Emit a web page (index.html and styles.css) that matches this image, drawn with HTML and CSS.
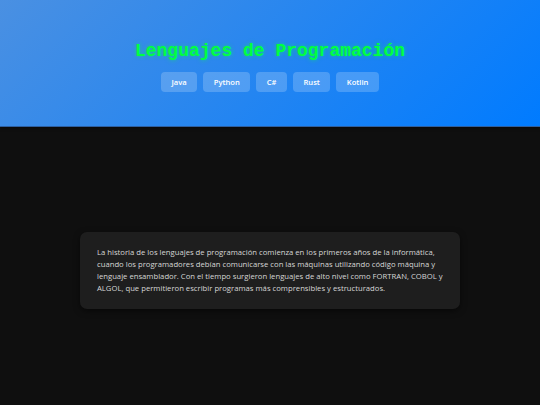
FILE: index.html
```html
<!DOCTYPE html>
<html lang="es">
<head>
<meta charset="utf-8">
<title>Lenguajes de Programación</title>
<link rel="stylesheet" href="styles.css">
</head>
<body>
<header class="hero">
  <h1 class="title">Lenguajes de Programación</h1>
  <nav class="tabs">
    <button class="tab">Java</button>
    <button class="tab">Python</button>
    <button class="tab">C#</button>
    <button class="tab">Rust</button>
    <button class="tab">Kotlin</button>
  </nav>
</header>
<main class="content">
  <section class="card">
    <p>La historia de los lenguajes de programación comienza en los primeros años de la informática, cuando los programadores debían comunicarse con las máquinas utilizando código máquina y lenguaje ensamblador. Con el tiempo surgieron lenguajes de alto nivel como FORTRAN, COBOL y ALGOL, que permitieron escribir programas más comprensibles y estructurados.</p>
  </section>
</main>
</body>
</html>
```
FILE: styles.css
```css
* { box-sizing: border-box; }
html, body { margin: 0; padding: 0; }
body {
  background: #0f0f0f;
  font-family: "Open Sans", "Liberation Sans", sans-serif;
  height: 405px;
  display: flex;
  flex-direction: column;
}
.hero {
  height: 127px;
  background: linear-gradient(135deg, #4a90e2 0%, #007bff 100%);
  border-bottom: 1px solid #2d5fa0;
  box-shadow: 0 1px 3px rgba(0,0,0,0.5);
  display: flex;
  flex-direction: column;
  align-items: center;
  padding-top: 40px;
}
.title {
  margin: 0;
  font-family: "Liberation Mono", "DejaVu Sans Mono", monospace;
  font-weight: bold;
  font-size: 18px;
  line-height: 22px;
  color: #00ff41;
  text-shadow: 0 0 4px rgba(0,255,65,0.6);
}
.tabs {
  display: flex;
  gap: 6px;
  margin-top: 10px;
}
.tab {
  height: 20px;
  padding: 0 10.5px;
  border: none;
  border-radius: 4px;
  background: rgba(255,255,255,0.2);
  color: #fff;
  font-family: "Open Sans", "Liberation Sans", sans-serif;
  font-weight: 600;
  font-size: 7.6px;
}
.content {
  flex: 1;
  display: flex;
  justify-content: center;
  align-items: flex-start;
  padding-top: 105px;
}
.card {
  width: 380px;
  background: #1e1e1e;
  border-radius: 7px;
  padding: 14px 17px 15px;
  box-shadow: 0 2px 6px rgba(0,0,0,0.5);
}
.card p {
  margin: 0;
  color: #d6d6d6;
  font-size: 7.7px;
  line-height: 12px;
}
```
